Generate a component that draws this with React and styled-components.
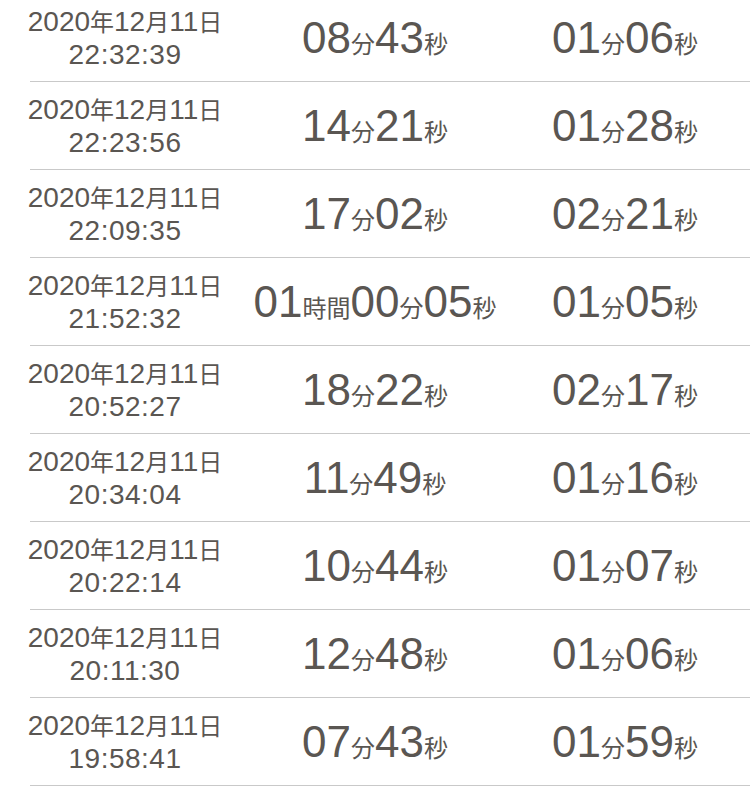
import React from "react";
import styled, { createGlobalStyle } from "styled-components";

const GlobalStyle = createGlobalStyle`
  html, body {
    margin: 0;
    padding: 0;
    background: #ffffff;
    overflow: hidden;
  }
  body {
    font-family: "Liberation Sans", "Noto Sans CJK JP", sans-serif;
    color: #5a5652;
  }
`;

const List = styled.div`
  display: flex;
  flex-direction: column;
  margin-top: -6px;
`;

const Row = styled.div`
  display: grid;
  grid-template-columns: 250px 250px 250px;
  align-items: center;
  height: 87px;
`;

const Divider = styled.div`
  height: 1px;
  margin-left: 30px;
  background: #c9c9c9;
`;

const DateCell = styled.div`
  display: flex;
  flex-direction: column;
  align-items: center;
  font-size: 28px;
  line-height: 33px;
  padding-top: 0;
`;

const Clock = styled.div`
  letter-spacing: 0.5px;
`;

const Kanji = styled.span`
  font-family: "Noto Sans CJK JP", sans-serif;
  font-size: ${(p) => p.$size}px;
`;

const Duration = styled.div`
  display: flex;
  justify-content: center;
  align-items: baseline;
  font-size: 44px;
  line-height: 50px;
  padding-top: 5px;
`;

const rows = [
  ["22:32:39", [["08", "分"], ["43", "秒"]], [["01", "分"], ["06", "秒"]]],
  ["22:23:56", [["14", "分"], ["21", "秒"]], [["01", "分"], ["28", "秒"]]],
  ["22:09:35", [["17", "分"], ["02", "秒"]], [["02", "分"], ["21", "秒"]]],
  ["21:52:32", [["01", "時間"], ["00", "分"], ["05", "秒"]], [["01", "分"], ["05", "秒"]]],
  ["20:52:27", [["18", "分"], ["22", "秒"]], [["02", "分"], ["17", "秒"]]],
  ["20:34:04", [["11", "分"], ["49", "秒"]], [["01", "分"], ["16", "秒"]]],
  ["20:22:14", [["10", "分"], ["44", "秒"]], [["01", "分"], ["07", "秒"]]],
  ["20:11:30", [["12", "分"], ["48", "秒"]], [["01", "分"], ["06", "秒"]]],
  ["19:58:41", [["07", "分"], ["43", "秒"]], [["01", "分"], ["59", "秒"]]],
];

const Time = ({ parts }) => (
  <Duration>
    {parts.map(([num, unit], i) => (
      <React.Fragment key={i}>
        <span>{num}</span>
        <Kanji $size={24}>{unit}</Kanji>
      </React.Fragment>
    ))}
  </Duration>
);

export default function App() {
  return (
    <>
      <GlobalStyle />
      <List>
        {rows.map(([clock, wait, stay], i) => (
          <React.Fragment key={i}>
            <Row>
              <DateCell>
                <div>
                  2020<Kanji $size={24}>年</Kanji>12<Kanji $size={24}>月</Kanji>11
                  <Kanji $size={24}>日</Kanji>
                </div>
                <Clock>{clock}</Clock>
              </DateCell>
              <Time parts={wait} />
              <Time parts={stay} />
            </Row>
            <Divider />
          </React.Fragment>
        ))}
      </List>
    </>
  );
}
